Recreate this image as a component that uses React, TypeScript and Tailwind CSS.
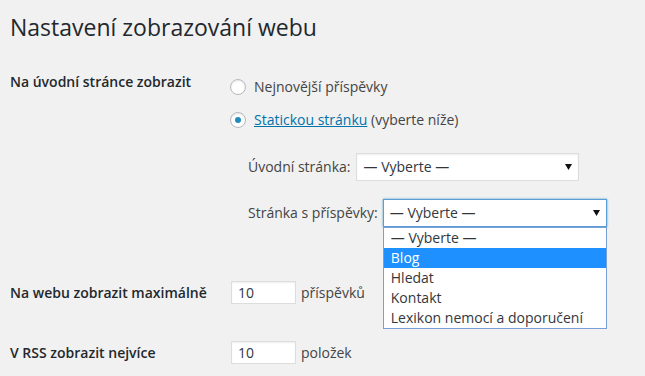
import React from "react";

const font = "font-['Open_Sans','Liberation_Sans',sans-serif]";

function Radio({ checked }: { checked?: boolean }) {
  return (
    <span className="w-4 h-4 shrink-0 rounded-full bg-white border border-[#b4b9be] shadow-[inset_0_1px_2px_rgba(0,0,0,0.1)] flex items-center justify-center">
      {checked && <span className="w-[6px] h-[6px] rounded-full bg-[#1e8cbe]" />}
    </span>
  );
}

function Arrow() {
  return (
    <svg width="7" height="6" viewBox="0 0 7 6" className="shrink-0">
      <polygon points="0,0 7,0 3.5,6" fill="#111" />
    </svg>
  );
}

const options = ["— Vyberte —", "Blog", "Hledat", "Kontakt", "Lexikon nemocí a doporučení"];

export default function App() {
  return (
    <div className={`min-h-[376px] w-[645px] bg-[#f1f1f1] pl-[10px] pt-[13px] ${font}`}>
      <h1 className="text-[23px] leading-[29px] font-normal text-[#23282d]">Nastavení zobrazování webu</h1>

      {/* Front page */}
      <div className="flex mt-[30px]">
        <div className="w-[220px] shrink-0 text-[14px] leading-[20px] font-semibold text-[#23282d]">
          Na úvodní stránce zobrazit
        </div>
        <div className="flex flex-col text-[14px] leading-[20px] text-[#444]">
          <label className="mt-[5px] h-5 flex items-center gap-[8px]">
            <Radio />
            <span>Nejnovější příspěvky</span>
          </label>
          <label className="mt-[13px] h-5 flex items-center gap-[8px]">
            <Radio checked />
            <span>
              <span className="text-[#0073aa] underline">Statickou stránku</span> (vyberte níže)
            </span>
          </label>

          <div className="mt-[23px] ml-[18px] flex items-center gap-[5px]">
            <span>Úvodní stránka:</span>
            <div className="w-[223px] h-[28px] bg-white border border-[#ddd] shadow-[inset_0_1px_2px_rgba(0,0,0,0.07)] flex items-center justify-between pl-[7px] pr-[6px] text-[#32373c]">
              <span>— Vyberte —</span>
              <Arrow />
            </div>
          </div>

          <div className="mt-[18px] ml-[18px] flex items-center gap-[5px]">
            <span>Stránka s příspěvky:</span>
            <div className="relative w-[224px] h-[28px]">
              <div className="h-full bg-white border border-[#5b9dd9] shadow-[0_0_2px_rgba(30,140,190,0.8)] flex items-center justify-between pl-[6px] pr-[6px] text-[#32373c]">
                <span>— Vyberte —</span>
                <Arrow />
              </div>
              <ul className="absolute left-0 top-full w-full bg-white border border-[#7a9fd6] z-10">
                {options.map((o, i) => (
                  <li
                    key={o}
                    className={`h-5 leading-[20px] pl-[7px] text-[14px] ${
                      i === 1 ? "bg-[#1e90ff] text-white" : "text-[#32373c]"
                    }`}
                  >
                    {o}
                  </li>
                ))}
              </ul>
            </div>
          </div>
        </div>
      </div>

      {/* Posts per page */}
      <div className="flex items-center mt-[54px]">
        <div className="w-[221px] shrink-0 text-[14px] leading-[20px] font-semibold text-[#23282d]">
          Na webu zobrazit maximálně
        </div>
        <div className="w-[65px] h-[23px] bg-white border border-[#ddd] shadow-[inset_0_1px_2px_rgba(0,0,0,0.07)] pl-[6px] text-[14px] leading-[21px] text-[#32373c]">
          10
        </div>
        <span className="ml-[5px] text-[14px] leading-[20px] text-[#444]">příspěvků</span>
      </div>

      {/* RSS */}
      <div className="flex items-center mt-[37px]">
        <div className="w-[221px] shrink-0 text-[14px] leading-[20px] font-semibold text-[#23282d]">
          V RSS zobrazit nejvíce
        </div>
        <div className="w-[65px] h-[23px] bg-white border border-[#ddd] shadow-[inset_0_1px_2px_rgba(0,0,0,0.07)] pl-[6px] text-[14px] leading-[21px] text-[#32373c]">
          10
        </div>
        <span className="ml-[5px] text-[14px] leading-[20px] text-[#444]">položek</span>
      </div>
    </div>
  );
}
